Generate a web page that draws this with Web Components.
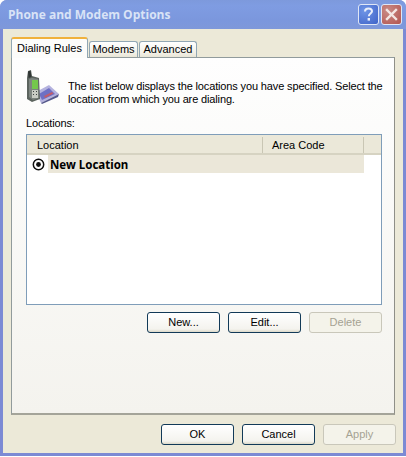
<!DOCTYPE html>
<html>
<head>
<meta charset="utf-8">
<title>Phone and Modem Options</title>
<style>
 html, body { margin: 0; background: #fff; }
 body { font: 11px "Liberation Sans", sans-serif; color: #000; }
</style>
</head>
<body>
<xp-window caption="Phone and Modem Options">
 <xp-tabs slot="tabs">
  <xp-tab active style="width:77px">Dialing Rules</xp-tab>
  <xp-tab style="width:49px">Modems</xp-tab>
  <xp-tab style="width:58px">Advanced</xp-tab>
 </xp-tabs>
 <xp-panel>
  <info-row>The list below displays the locations you have specified. Select the<br>location from which you are dialing.</info-row>
  <location-list label="Locations:"></location-list>
  <button-row>
   <xp-button>New...</xp-button>
   <xp-button>Edit...</xp-button>
   <xp-button disabled>Delete</xp-button>
  </button-row>
 </xp-panel>
 <button-row slot="footer" class="footer">
  <xp-button>OK</xp-button>
  <xp-button>Cancel</xp-button>
  <xp-button disabled>Apply</xp-button>
 </button-row>
</xp-window>

<script>
/** Small helper: every element gets an open root with its markup */
class Base extends HTMLElement {
 constructor(html) {
  super()
  this.attachShadow({ mode: "open" }).innerHTML = html
 }
}

class XpWindow extends Base {
 constructor() {
  super(`<style>
   :host {
    display: flex;
    flex-direction: column;
    box-sizing: border-box;
    width: 406px;
    height: 456px;
    border-radius: 7px 7px 0 0;
    background: #7c8ad4;
    padding: 0 3px 3px;
    overflow: hidden;
   }
   header {
    flex: none;
    display: flex;
    align-items: center;
    height: 29px;
    margin: 0 -3px;
    padding: 0 4px 0 8px;
    background: linear-gradient(#7d99dc 0, #7f9ce2 20%, #7b97dd 70%, #7e98da 100%);
   }
   h1 {
    flex: 1;
    margin: 0;
    font: bold 12px "Open Sans", sans-serif;
    color: #d9e3f6;
   }
   .cap {
    flex: none;
    width: 21px;
    height: 21px;
    margin-left: 2px;
    box-sizing: border-box;
    border: 1px solid #dfe6f5;
    border-radius: 3px;
    display: grid;
    place-items: center;
   }
   .help { background: radial-gradient(circle at 30% 30%, #6f95e6, #3f63c8); }
   .close { background: radial-gradient(circle at 30% 30%, #c98a86, #b3554f); }
   main {
    flex: 1;
    display: flex;
    flex-direction: column;
    background: #ece9d8;
    padding: 8px 8px 0;
    min-height: 0;
   }
   .foot { flex: none; }
  </style>
  <header>
   <h1></h1>
   <div class="cap help">
    <svg width="13" height="15" viewBox="0 0 13 15"><path d="M3 4.5C3 2.5 4.5 1.5 6.5 1.5S10 2.7 10 4.3C10 6.5 6.8 6.5 6.8 9.2" fill="none" stroke="#e8eefb" stroke-width="2"/><rect x="5.6" y="11" width="2.4" height="2.6" fill="#e8eefb"/></svg>
   </div>
   <div class="cap close">
    <svg width="13" height="13" viewBox="0 0 13 13"><path d="M2 2L11 11M11 2L2 11" stroke="#f3e6e4" stroke-width="2.4" stroke-linecap="square"/></svg>
   </div>
  </header>
  <main>
   <slot name="tabs"></slot>
   <slot></slot>
   <div class="foot"><slot name="footer"></slot></div>
  </main>`)
 }

 connectedCallback() {
  this.shadowRoot.querySelector("h1").textContent =
   this.getAttribute("caption")
 }
}

class XpTabs extends Base {
 constructor() {
  super(`<style>
   :host {
    display: flex;
    align-items: flex-end;
    gap: 1px;
    height: 21px;
    margin-bottom: -1px;
    position: relative;
    z-index: 1;
   }
  </style><slot></slot>`)
 }
}

class XpTab extends Base {
 constructor() {
  super(`<style>
   :host {
    display: block;
    box-sizing: border-box;
    height: 16px;
    margin-bottom: 1px;
    line-height: 15px;
    text-align: center;
    font-size: 11px;
    white-space: nowrap;
    border: 1px solid #91a7b4;
    border-bottom: 0;
    border-radius: 3px 3px 0 0;
    background: linear-gradient(#fff, #f3f1e8 70%, #e8e5d6);
   }
   :host([active]) {
    height: 21px;
    margin-bottom: 0;
    line-height: 19px;
    border-top: 2px solid #f0b13c;
    border-color: #f0b13c #91a7b4 #fbfbf9;
    background: #fcfcfa;
   }
  </style><slot></slot>`)
 }
}

class XpPanel extends Base {
 constructor() {
  super(`<style>
   :host {
    flex: none;
    display: flex;
    flex-direction: column;
    box-sizing: border-box;
    height: 358px;
    width: 384px;
    padding: 15px 12px 0 14px;
    border: 1px solid #919b9c;
    border-right-color: #8f8f88;
    border-bottom: 2px solid #a4a499;
    background: linear-gradient(#fefefe, #f4f3ee);
   }
  </style><slot></slot>`)
 }
}

class InfoRow extends Base {
 constructor() {
  super(`<style>
   :host {
    display: flex;
    align-items: flex-start;
    height: 42px;
   }
   svg { flex: none; margin: -3px 9px 0 0; filter: blur(.4px); }
   p { margin: 7px 0 0; line-height: 13px; font-size: 11px; white-space: nowrap; letter-spacing: -.14px; }
  </style>
  <svg width="33" height="34" viewBox="0 0 33 34">
   <path d="M10 22L23 15L33 24L15 33Z" fill="#b4b2de"/>
   <path d="M13 24L23 18L29 24L16 30Z" fill="#6e70c4"/>
   <path d="M18 26L26 22L27.5 23.5L19 28Z" fill="#c25b6a"/>
   <path d="M15 33L33 24L32 27L16 34Z" fill="#55588c"/>
   <path d="M2 1L5 0L6 6L13 8L14 29L6 32L1 29L1 8Z" fill="#5c645f"/>
   <path d="M2 1.5L4.5 .7L5.5 7L2.5 8Z" fill="#2f3533"/>
   <path d="M3 9L6 8L12 9L13 28L7 30L3 27Z" fill="#7d8580"/>
   <rect x="6" y="10" width="6" height="9" fill="#74c84c"/>
   <rect x="6" y="20" width="6" height="8" fill="#c8ccc4"/>
   <path d="M7 21h1v1h-1zM10 21h1v1h-1zM7 24h1v1h-1zM10 24h1v1h-1z" fill="#3e4442"/>
  </svg>
  <p><slot></slot></p>`)
 }
}

class LocationList extends Base {
 constructor() {
  super(`<style>
   :host { display: block; }
   label { display: block; height: 18px; padding-top: 1px; line-height: 14px; font-size: 11px; letter-spacing: -.14px; }
   .box {
    box-sizing: border-box;
    height: 171px;
    border: 1px solid #7f9db9;
    background: #fff;
   }
   .head {
    display: grid;
    grid-template-columns: 235px 101px 1fr;
    height: 20px;
    box-sizing: border-box;
    border-bottom: 2px solid #d6d3c2;
    background: #ebe8d9;
    line-height: 20px;
   }
   .head div { padding-left: 10px; position: relative; }
   .head div + div { border-left: 1px solid #c9c6b4; padding-left: 9px; margin: 2px 0; line-height: 16px; }
   .row {
    display: flex;
    align-items: center;
    width: 337px;
    height: 18px;
   }
   .mark {
    flex: none;
    display: grid;
    place-items: center;
    width: 21px;
    height: 18px;
    background: #fff;
    padding-left: 2px;
    box-sizing: border-box;
   }
   .name {
    flex: 1;
    height: 18px;
    padding-left: 2px;
    background: #ebe7d9;
    font: bold 11.5px/19px "Noto Sans", sans-serif;
   }
  </style>
  <label></label>
  <div class="box">
   <div class="head">
    <div>Location</div><div>Area Code</div><div></div>
   </div>
   <div class="row">
    <span class="mark">
     <svg width="13" height="13" viewBox="0 0 13 13"><circle cx="6.5" cy="6.5" r="5.2" fill="#fff" stroke="#111" stroke-width="1.5"/><circle cx="6.5" cy="6.5" r="2.4" fill="#111"/></svg>
    </span>
    <span class="name">New Location</span>
   </div>
  </div>`)
 }

 connectedCallback() {
  this.shadowRoot.querySelector("label").textContent =
   this.getAttribute("label")
 }
}

class ButtonRow extends Base {
 constructor() {
  super(`<style>
   :host {
    display: flex;
    justify-content: flex-end;
    gap: 8px;
    margin-top: 7px;
   }
   :host(.footer) { margin: 9px -1px 0 0; }
  </style><slot></slot>`)
 }
}

class XpButton extends Base {
 constructor() {
  super(`<style>
   :host {
    display: block;
    box-sizing: border-box;
    width: 73px;
    height: 21px;
    line-height: 19px;
    text-align: center;
    font-size: 11px;
    border: 1px solid #123a58;
    border-radius: 3px;
    background: linear-gradient(#fff, #f4f3ee 85%, #dcd8c8);
   }
   :host([disabled]) {
    color: #a5a293;
    border-color: #c9c7ba;
    background: #f4f3ea;
   }
  </style><slot></slot>`)
 }
}

customElements.define("xp-window", XpWindow)
customElements.define("xp-tabs", XpTabs)
customElements.define("xp-tab", XpTab)
customElements.define("xp-panel", XpPanel)
customElements.define("info-row", InfoRow)
customElements.define("location-list", LocationList)
customElements.define("button-row", ButtonRow)
customElements.define("xp-button", XpButton)
</script>
</body>
</html>
